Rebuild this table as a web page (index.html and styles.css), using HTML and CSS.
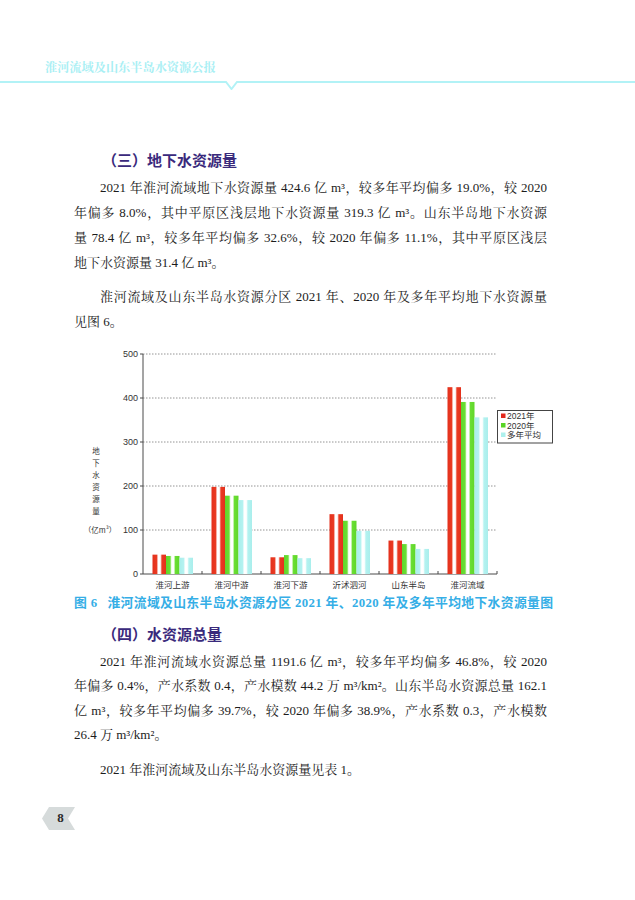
FILE: index.html
```html
<!DOCTYPE html>
<html lang="zh-CN">
<head>
<meta charset="utf-8">
<title>淮河流域及山东半岛水资源公报</title>
<link rel="stylesheet" href="styles.css">
</head>
<body>
<header class="page-head">
  <div class="head-title">淮河流域及山东半岛水资源公报</div>
  <svg class="head-rule" width="635" height="14" viewBox="0 0 635 14"><polyline points="0,6 226,6 231.5,13 237,6 635,6"/></svg>
</header>
<main class="content">
  <h2 class="sec sec-a">（三）地下水资源量</h2>
  <p class="para p1">
    <span class="ln ind">2021 年淮河流域地下水资源量 424.6 亿 m³，较多年平均偏多 19.0%，较 2020</span>
    <span class="ln">年偏多 8.0%，其中平原区浅层地下水资源量 319.3 亿 m³。山东半岛地下水资源</span>
    <span class="ln">量 78.4 亿 m³，较多年平均偏多 32.6%，较 2020 年偏多 11.1%，其中平原区浅层</span>
    <span class="ln end">地下水资源量 31.4 亿 m³。</span>
  </p>
  <p class="para p2">
    <span class="ln ind">淮河流域及山东半岛水资源分区 2021 年、2020 年及多年平均地下水资源量</span>
    <span class="ln end">见图 6。</span>
  </p>
  <svg class="chart" width="482" height="252" viewBox="0 0 482 252">
    <defs>
      <linearGradient id="gRed" x1="0" y1="0" x2="1" y2="0">
        <stop offset="0" stop-color="#e3301c"/><stop offset="0.3" stop-color="#ea3a22"/>
        <stop offset="0.42" stop-color="#ffffff"/><stop offset="0.58" stop-color="#ffffff"/>
        <stop offset="0.7" stop-color="#ea3a22"/><stop offset="1" stop-color="#e3301c"/>
      </linearGradient>
      <linearGradient id="gGreen" x1="0" y1="0" x2="1" y2="0">
        <stop offset="0" stop-color="#5fd62a"/><stop offset="0.3" stop-color="#6ade33"/>
        <stop offset="0.42" stop-color="#ffffff"/><stop offset="0.58" stop-color="#ffffff"/>
        <stop offset="0.7" stop-color="#6ade33"/><stop offset="1" stop-color="#5fd62a"/>
      </linearGradient>
      <linearGradient id="gCyan" x1="0" y1="0" x2="1" y2="0">
        <stop offset="0" stop-color="#a9eeec"/><stop offset="0.3" stop-color="#b4f2f0"/>
        <stop offset="0.42" stop-color="#ffffff"/><stop offset="0.58" stop-color="#ffffff"/>
        <stop offset="0.7" stop-color="#b4f2f0"/><stop offset="1" stop-color="#a9eeec"/>
      </linearGradient>
    </defs>
    <g class="grid">
      <line x1="69" y1="14" x2="423" y2="14"/>
      <line x1="69" y1="58" x2="423" y2="58"/>
      <line x1="69" y1="102" x2="423" y2="102"/>
      <line x1="69" y1="146" x2="423" y2="146"/>
      <line x1="69" y1="190" x2="423" y2="190"/>
    </g>
    <g class="axis">
      <line x1="69" y1="14" x2="69" y2="234"/>
      <line x1="69" y1="234" x2="423" y2="234"/>
      <line x1="66" y1="14" x2="69" y2="14"/>
      <line x1="66" y1="58" x2="69" y2="58"/>
      <line x1="66" y1="102" x2="69" y2="102"/>
      <line x1="66" y1="146" x2="69" y2="146"/>
      <line x1="66" y1="190" x2="69" y2="190"/>
      <line x1="66" y1="234" x2="69" y2="234"/>
      <line x1="128" y1="231" x2="128" y2="234"/>
      <line x1="187" y1="231" x2="187" y2="234"/>
      <line x1="246" y1="231" x2="246" y2="234"/>
      <line x1="305" y1="231" x2="305" y2="234"/>
      <line x1="364" y1="231" x2="364" y2="234"/>
      <line x1="423" y1="231" x2="423" y2="234"/>
    </g>
    <g class="ytick">
      <text x="64" y="14">500</text>
      <text x="64" y="58">400</text>
      <text x="64" y="102">300</text>
      <text x="64" y="146">200</text>
      <text x="64" y="190">100</text>
      <text x="64" y="234">0</text>
    </g>
    <g class="ytitle">
      <text x="22" y="110">地</text>
      <text x="22" y="122">下</text>
      <text x="22" y="134">水</text>
      <text x="22" y="146">资</text>
      <text x="22" y="158">源</text>
      <text x="22" y="170">量</text>
      <text x="26" y="189">（亿m³）</text>
    </g>
    <g class="bars">
      <rect x="78.5" y="214.64" width="13.5" height="19.36" fill="url(#gRed)"/>
      <rect x="92" y="215.96" width="13.5" height="18.04" fill="url(#gGreen)"/>
      <rect x="105.5" y="217.72" width="13.5" height="16.28" fill="url(#gCyan)"/>

      <rect x="137.5" y="146.88" width="13.5" height="87.12" fill="url(#gRed)"/>
      <rect x="151" y="155.68" width="13.5" height="78.32" fill="url(#gGreen)"/>
      <rect x="164.5" y="160.08" width="13.5" height="73.92" fill="url(#gCyan)"/>

      <rect x="196.5" y="217.28" width="13.5" height="16.72" fill="url(#gRed)"/>
      <rect x="210" y="215.08" width="13.5" height="18.92" fill="url(#gGreen)"/>
      <rect x="223.5" y="218.16" width="13.5" height="15.84" fill="url(#gCyan)"/>

      <rect x="255.5" y="174.16" width="13.5" height="59.84" fill="url(#gRed)"/>
      <rect x="269" y="180.76" width="13.5" height="53.24" fill="url(#gGreen)"/>
      <rect x="282.5" y="190.88" width="13.5" height="43.12" fill="url(#gCyan)"/>

      <rect x="314.5" y="200.56" width="13.5" height="33.44" fill="url(#gRed)"/>
      <rect x="328" y="204.08" width="13.5" height="29.92" fill="url(#gGreen)"/>
      <rect x="341.5" y="208.92" width="13.5" height="25.08" fill="url(#gCyan)"/>

      <rect x="373.5" y="47.18" width="13.5" height="186.82" fill="url(#gRed)"/>
      <rect x="387" y="61.96" width="13.5" height="172.04" fill="url(#gGreen)"/>
      <rect x="400.5" y="77.36" width="13.5" height="156.64" fill="url(#gCyan)"/>
    </g>
    <g class="xlabel">
      <text x="98.5" y="244">淮河上游</text>
      <text x="157.5" y="244">淮河中游</text>
      <text x="216.5" y="244">淮河下游</text>
      <text x="275.5" y="244">沂沭泗河</text>
      <text x="334.5" y="244">山东半岛</text>
      <text x="393.5" y="244">淮河流域</text>
    </g>
    <g class="legend">
      <rect class="legend-box" x="423.5" y="70.5" width="55" height="32.5"/>
      <rect x="427" y="73.5" width="4.5" height="4.5" fill="#e2281a"/>
      <rect x="427" y="83" width="4.5" height="4.5" fill="#58d424"/>
      <rect x="427" y="92.5" width="4.5" height="4.5" fill="#aef0ec"/>
      <text x="433" y="76">2021年</text>
      <text x="433" y="85.5">2020年</text>
      <text x="433" y="95">多年平均</text>
    </g>
  </svg>
  <p class="cap"><span class="cap-no">图 6</span>淮河流域及山东半岛水资源分区 2021 年、2020 年及多年平均地下水资源量图</p>
  <h2 class="sec sec-b">（四）水资源总量</h2>
  <p class="para p3">
    <span class="ln ind">2021 年淮河流域水资源总量 1191.6 亿 m³，较多年平均偏多 46.8%，较 2020</span>
    <span class="ln">年偏多 0.4%，产水系数 0.4，产水模数 44.2 万 m³/km²。山东半岛水资源总量 162.1</span>
    <span class="ln">亿 m³，较多年平均偏多 39.7%，较 2020 年偏多 38.9%，产水系数 0.3，产水模数</span>
    <span class="ln end">26.4 万 m³/km²。</span>
  </p>
  <p class="para p4">
    <span class="ln ind end">2021 年淮河流域及山东半岛水资源量见表 1。</span>
  </p>
</main>
<footer class="folio">
  <svg class="folio-badge" width="33" height="23" viewBox="0 0 33 23">
    <polygon points="0,11.5 7,0 33,0 26,11.5 33,23 7,23"/>
    <text x="18.5" y="10.5">8</text>
  </svg>
</footer>
</body>
</html>
```

FILE: styles.css
```css
* { box-sizing: border-box; }

html, body {
  margin: 0;
  padding: 0;
  background: #ffffff;
}

body {
  width: 635px;
  height: 900px;
  overflow: hidden;
  font-family: "Liberation Serif", "Noto Serif CJK SC", "Noto Sans CJK SC", serif;
  color: #1c1c1c;
}

/* ---------- running head ---------- */
.page-head {
  padding-top: 58px;
}

.head-title {
  padding-left: 45px;
  font-family: "Noto Serif CJK SC", "Noto Sans CJK SC", serif;
  font-size: 12.2px;
  line-height: 18px;
  font-weight: bold;
  color: #a9eff4;
}

.head-rule {
  display: block;
}

.head-rule polyline {
  fill: none;
  stroke: #b2f2f6;
  stroke-width: 2;
}

/* ---------- body ---------- */
.content {
  width: 473px;
  margin-left: 74px;
}

.sec {
  margin: 0;
  padding-left: 28px;
  font-family: "Noto Sans CJK SC", sans-serif;
  font-size: 15px;
  line-height: 22px;
  font-weight: bold;
  color: #3a2a7c;
}

.sec-a { margin-top: 59px; }
.sec-b { margin-top: 11px; }

.para {
  margin: 0;
  font-size: 13px;
  line-height: 25px;
}

.p1 { margin-top: 3.5px; }
.p2 { margin-top: 9px; }
.p3 { margin-top: 4.75px; line-height: 24.5px; }
.p4 { margin-top: 10px; line-height: 24.5px; }

.ln {
  display: block;
  text-align: justify;
  text-align-last: justify;
}

.ln.end {
  text-align-last: left;
}

.ind {
  text-indent: 26px;
}

/* ---------- chart ---------- */
.chart {
  display: block;
  margin-top: 6.5px;
  overflow: visible;
}

.grid line {
  stroke: #7a7a7a;
  stroke-width: 0.8;
  stroke-dasharray: 1.5 1.5;
}

.axis line {
  stroke: #4a4a4a;
  stroke-width: 1;
}

.ytick text {
  font-family: "Liberation Sans", "Noto Sans CJK SC", sans-serif;
  font-size: 9px;
  fill: #333333;
  text-anchor: end;
  dominant-baseline: central;
}

.ytitle text {
  font-family: "Noto Sans CJK SC", sans-serif;
  font-size: 7.5px;
  fill: #333333;
  text-anchor: middle;
  dominant-baseline: central;
}

.xlabel text {
  font-family: "Noto Sans CJK SC", sans-serif;
  font-size: 8.5px;
  fill: #333333;
  text-anchor: middle;
  dominant-baseline: central;
}

.legend-box {
  fill: #ffffff;
  stroke: #444444;
  stroke-width: 1;
}

.legend text {
  font-family: "Liberation Sans", "Noto Sans CJK SC", sans-serif;
  font-size: 8.5px;
  fill: #333333;
  dominant-baseline: central;
}

/* ---------- caption ---------- */
.cap {
  margin: 2px 0 0;
  font-family: "Liberation Serif", "Noto Sans CJK SC", sans-serif;
  font-size: 12.8px;
  line-height: 18px;
  font-weight: bold;
  letter-spacing: 0.35px;
  color: #35aee6;
  white-space: nowrap;
}

.cap-no {
  margin-right: 10px;
}

/* ---------- folio ---------- */
.folio {
  margin-top: 24.85px;
  padding-left: 42px;
}

.folio-badge {
  display: block;
}

.folio-badge polygon {
  fill: #d6dbdb;
}

.folio-badge text {
  font-family: "Liberation Serif", serif;
  font-size: 13px;
  font-weight: bold;
  fill: #2a2a2a;
  text-anchor: middle;
  dominant-baseline: central;
}
```
